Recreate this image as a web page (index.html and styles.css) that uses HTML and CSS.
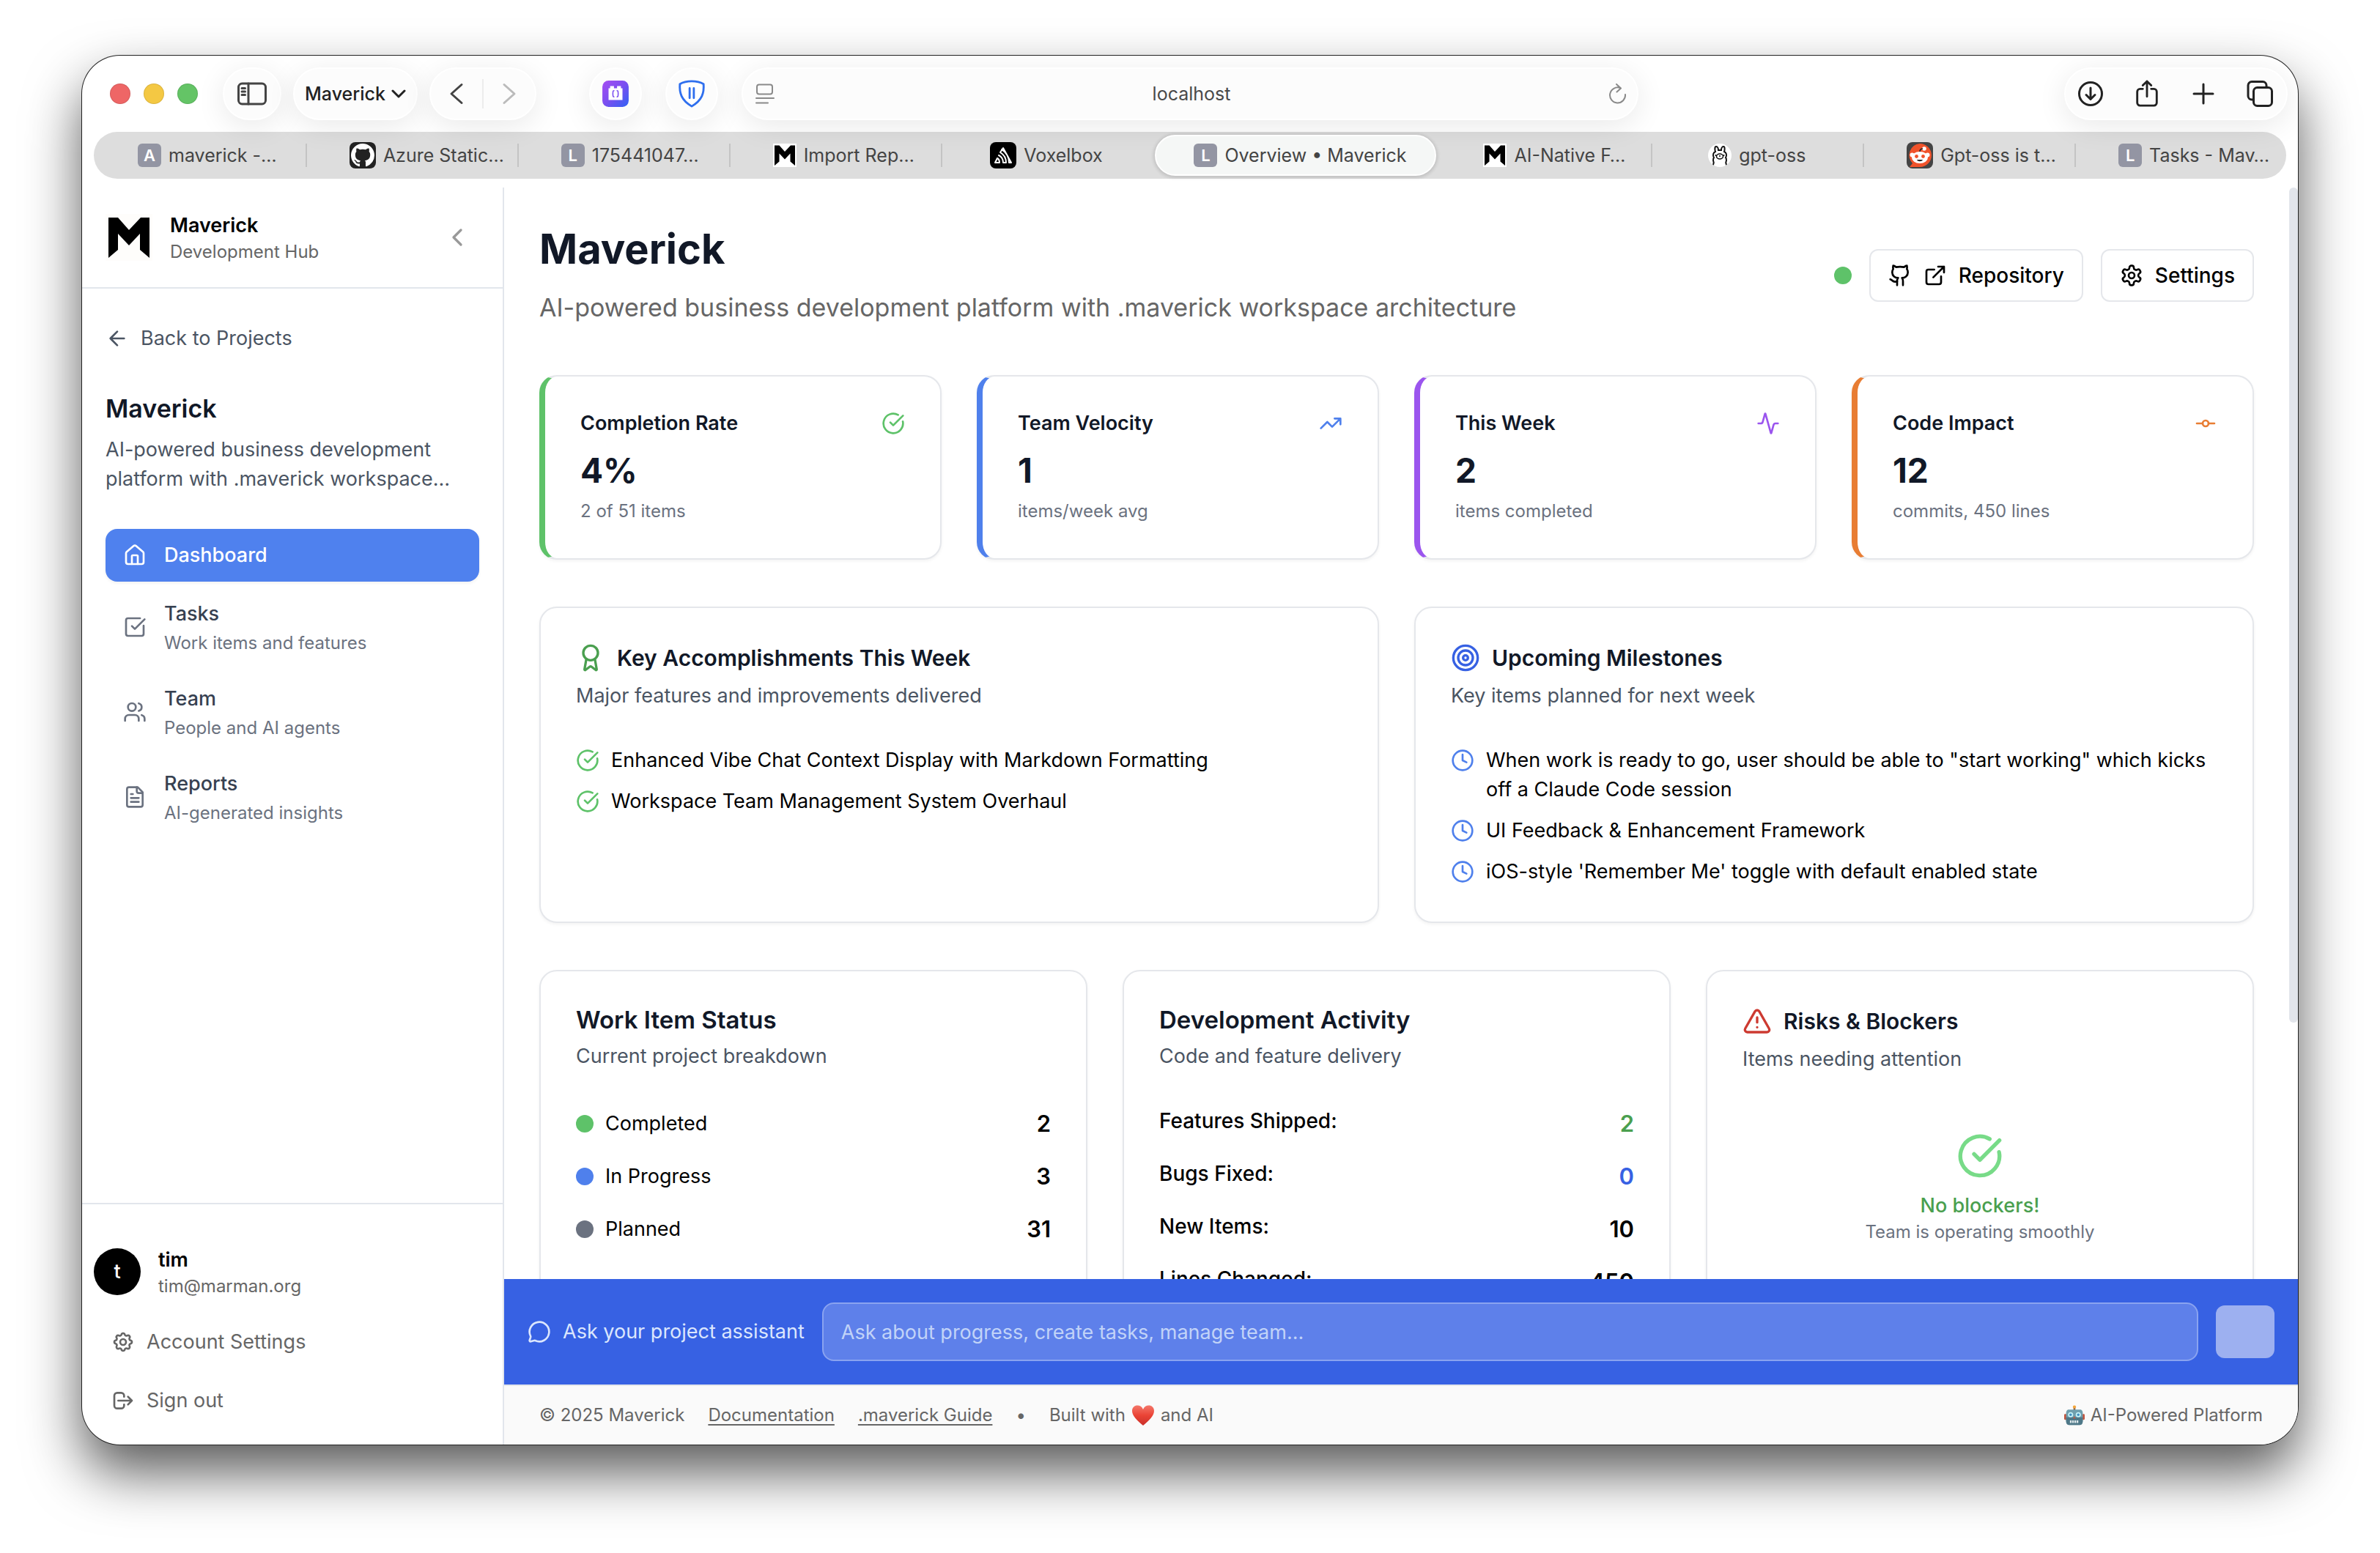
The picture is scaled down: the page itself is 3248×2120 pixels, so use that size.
FILE: index.html
```html
<!DOCTYPE html>
<html lang="en">
<head>
<meta charset="utf-8">
<title>Overview • Maverick</title>
<link rel="stylesheet" href="styles.css">
</head>
<body>
<svg class="sprite" aria-hidden="true">
  <symbol id="i-check" viewBox="0 0 24 24"><path d="M21.801 10A10 10 0 1 1 17 3.335"/><path d="m9 11 3 3L22 4"/></symbol>
  <symbol id="i-clock" viewBox="0 0 24 24"><circle cx="12" cy="12" r="10"/><path d="M12 6v6l4 2"/></symbol>
  <symbol id="i-logo" viewBox="0 0 64 64"><path fill="#000" stroke="none" d="M4 5h13l15 17L48 5h12v55L47 49V27L32 43 17 27v22L4 60z"/></symbol>
</svg>
<div class="window">
  <header class="browser">
    <div class="toolbar">
      <div class="lights"><span class="light light--close"></span><span class="light light--min"></span><span class="light light--max"></span></div>
      <button class="pill pill--sidebar" aria-label="Toggle sidebar"><svg class="icon-lg" viewBox="0 0 40 32"><rect x="1.500" y="2" width="37" height="28" rx="5"/><path d="M15 2v28M6 8.500h4.500M6 13h4.500M6 17.500h4.500"/></svg></button>
      <button class="pill pill--profile">Maverick<svg class="caret" viewBox="0 0 20 20"><path d="m2 6 8 8 8-8"/></svg></button>
      <div class="pill pill--nav">
        <button class="nav-btn" aria-label="Back"><svg viewBox="0 0 36 36"><path d="M25 5.500 11 18l14 12.500"/></svg></button>
        <span class="nav-sep"></span>
        <button class="nav-btn nav-btn--off" aria-label="Forward"><svg viewBox="0 0 36 36"><path d="m11 5.500 14 12.500-14 12.500"/></svg></button>
      </div>
      <button class="pill pill--round pill--ext" aria-label="Brick extension"><svg viewBox="0 0 36 36"><defs><linearGradient id="g-ext" x1="0" y1="0" x2="1" y2="1"><stop offset="0" stop-color="#a64df2"/><stop offset=".5" stop-color="#7a4ff0"/><stop offset="1" stop-color="#2f62f4"/></linearGradient></defs><rect x="1" y="1" width="34" height="34" rx="8" fill="url(#g-ext)"/><path fill="#fff" d="M9 11h2V8h5v3h4V8h5v3h2v15H9z"/><path fill="none" stroke="#7a4ff0" stroke-width="1.500" d="M16 14c-2 0-1 2-1.500 4 .5 2-.5 4 1.500 4M20 14c2 0 1 2 1.500 4-.5 2 .5 4-1.500 4"/></svg></button>
      <button class="pill pill--round" aria-label="Shield extension"><svg viewBox="0 0 40 40"><path fill="#fff" stroke="#2f6fee" stroke-width="3" d="M20 2c6 0 12 1 17 4 1 13-2 23-17 32C5 29 2 19 3 6c5-3 11-4 17-4z"/><path stroke="#2f6fee" stroke-width="3" fill="none" d="M17 12v14M23 12v14"/></svg></button>
      <div class="pill pill--url">
        <svg class="url-icon" viewBox="0 0 28 28"><rect x="3" y="1.500" width="21" height="13" rx="3"/><path d="M2 20h24M2 26.500h16"/></svg>
        <input class="url-input" type="text" value="localhost" aria-label="Address">
        <button class="reload" aria-label="Reload"><svg class="url-icon" viewBox="0 0 28 28"><path d="M24 15a10.500 10.500 0 1 1-7-9M12 1l6 5.500-5.500 5"/></svg></button>
      </div>
      <div class="pill pill--actions">
        <button class="act" aria-label="Downloads"><svg viewBox="0 0 36 36"><circle cx="18" cy="18" r="15.500"/><path d="M18 10v15M12 19.500l6 6 6-6"/></svg></button>
        <button class="act" aria-label="Share"><svg viewBox="0 0 36 40"><path d="M12 13H8a4 4 0 0 0-4 4v16a4 4 0 0 0 4 4h20a4 4 0 0 0 4-4V17a4 4 0 0 0-4-4h-4M18 24V2M12 8l6-6 6 6"/></svg></button>
        <button class="act" aria-label="New tab"><svg viewBox="0 0 36 36"><path d="M18 5v26M5 18h26"/></svg></button>
        <button class="act" aria-label="Tab overview"><svg viewBox="0 0 36 36"><rect x="9.500" y="9.500" width="25" height="25" rx="5"/><path d="M9 26H7a5 5 0 0 1-5-5V6.500A5 5 0 0 1 7 1.500h15a5 5 0 0 1 5 5V9"/></svg></button>
      </div>
    </div>
    <nav class="tabs" aria-label="Browser tabs">
      <a class="tab tab--cut" href="#"><span class="fav">A</span>maverick -…</a>
      <a class="tab tab--cut tab--sep" href="#"><svg class="fav-lg" viewBox="0 0 36 36"><rect width="36" height="36" rx="8" fill="#222"/><path transform="translate(2 2) scale(2)" fill="#fff" d="M8 0C3.580 0 0 3.580 0 8c0 3.540 2.290 6.530 5.470 7.590.4.070.55-.17.55-.38 0-.19-.01-.82-.01-1.490-2.010.37-2.530-.49-2.690-.94-.09-.23-.48-.94-.82-1.130-.28-.15-.68-.52-.01-.53.63-.01 1.080.58 1.230.82.72 1.210 1.870.87 2.330.66.07-.52.28-.87.51-1.070-1.780-.2-3.640-.89-3.640-3.950 0-.87.31-1.590.82-2.150-.08-.2-.36-1.020.08-2.120 0 0 .67-.21 2.200.82.64-.18 1.320-.27 2-.27s1.360.09 2 .27c1.530-1.040 2.200-.82 2.200-.82.44 1.100.16 1.920.08 2.120.51.56.82 1.270.82 2.150 0 3.070-1.870 3.750-3.650 3.950.29.25.54.73.54 1.480 0 1.070-.01 1.930-.01 2.200 0 .21.15.46.55.38A8.010 8.010 0 0 0 16 8c0-4.420-3.580-8-8-8z"/></svg>Azure Static…</a>
      <a class="tab tab--cut tab--sep" href="#"><span class="fav">L</span>175441047…</a>
      <a class="tab tab--cut tab--sep" href="#"><svg class="fav-m" viewBox="0 0 64 64"><use href="#i-logo"/></svg>Import Rep…</a>
      <a class="tab tab--sep" href="#"><svg class="fav-lg" viewBox="0 0 36 36"><rect width="36" height="36" rx="8" fill="#000"/><path fill="none" stroke="#fff" stroke-width="2" stroke-linejoin="round" stroke-linecap="round" d="M13 28H7l3-6c2 1 3 3 3 6zM12 18c4 2 6 6 6 10h4c0-6-3-11-8-14l4-6 11 20h-3c0-8-4-14-10-18"/></svg>Voxelbox</a>
      <a class="tab tab--active" href="#" aria-current="page"><span class="fav">L</span>Overview • Maverick</a>
      <a class="tab tab--cut" href="#"><svg class="fav-m" viewBox="0 0 64 64"><use href="#i-logo"/></svg>AI-Native F…</a>
      <a class="tab tab--sep" href="#"><svg class="fav-m fav-m--round" viewBox="0 0 32 32"><path fill="none" stroke="#111" stroke-width="2" stroke-linecap="round" d="M7 29c1-2 1-4 0-6 0-2 0-3 1-4-2-3-1-7 2-8-1-3-1-7 1-7s3 3 3 5h4c0-2 1-5 3-5s2 4 1 7c3 1 4 5 2 8 1 1 1 2 1 4-1 2-1 4 0 6"/><ellipse cx="16" cy="17.500" rx="4.500" ry="3.500" fill="none" stroke="#111" stroke-width="1.500"/><circle cx="10.500" cy="16" r="1"/><circle cx="21.500" cy="16" r="1"/><circle cx="16" cy="17" r="1"/></svg>gpt-oss</a>
      <a class="tab tab--cut tab--sep" href="#"><svg class="fav-lg" viewBox="0 0 36 36"><rect width="36" height="36" rx="8" fill="#444"/><path fill="#f0532b" d="M18 2a16 16 0 1 1 0 32H4l4-5A16 16 0 0 1 18 2z"/><ellipse cx="18" cy="21" rx="11" ry="8" fill="#fff"/><circle cx="7.500" cy="17.500" r="3" fill="#fff"/><circle cx="28.500" cy="17.500" r="3" fill="#fff"/><circle cx="24" cy="9" r="2.800" fill="#fff"/><path d="M18 13c0-3 2-4 4-4" stroke="#222" stroke-width="1.500" fill="none"/><circle cx="13.500" cy="19.500" r="2.400" fill="#f0532b"/><circle cx="22.500" cy="19.500" r="2.400" fill="#f0532b"/><path fill="#222" d="M14 24h8c-1 3-7 3-8 0z"/></svg>Gpt-oss is t…</a>
      <a class="tab tab--cut tab--sep" href="#"><span class="fav">L</span>Tasks - Mav…</a>
    </nav>
  </header>

  <div class="app">
    <aside class="sidebar">
      <div class="brand">
        <svg class="brand-logo" viewBox="0 0 64 64"><use href="#i-logo"/></svg>
        <div class="brand-text"><div class="brand-name">Maverick</div><div class="brand-sub">Development Hub</div></div>
        <button class="collapse" aria-label="Collapse sidebar"><svg class="ico ico--md" viewBox="0 0 24 24"><path d="m15 18-6-6 6-6"/></svg></button>
      </div>
      <div class="side-body">
        <a class="back" href="#"><svg class="ico" viewBox="0 0 24 24"><path d="m12 19-7-7 7-7M19 12H5"/></svg>Back to Projects</a>
        <div class="project">
          <h2 class="project-name">Maverick</h2>
          <p class="project-desc">AI-powered business development platform with .maverick workspace…</p>
        </div>
        <nav class="menu" aria-label="Project">
          <a class="menu-item menu-item--active" href="#"><svg class="ico" viewBox="0 0 24 24"><path d="M15 21v-8a1 1 0 0 0-1-1h-4a1 1 0 0 0-1 1v8"/><path d="M3 10a2 2 0 0 1 .709-1.528l7-5.999a2 2 0 0 1 2.582 0l7 5.999A2 2 0 0 1 21 10v9a2 2 0 0 1-2 2H5a2 2 0 0 1-2-2z"/></svg><span class="menu-title">Dashboard</span></a>
          <a class="menu-item" href="#"><svg class="ico" viewBox="0 0 24 24"><path d="M21 10.656V19a2 2 0 0 1-2 2H5a2 2 0 0 1-2-2V5a2 2 0 0 1 2-2h12.344"/><path d="m9 11 3 3L22 4"/></svg><span class="menu-text"><span class="menu-title">Tasks</span><span class="menu-sub">Work items and features</span></span></a>
          <a class="menu-item" href="#"><svg class="ico" viewBox="0 0 24 24"><path d="M16 21v-2a4 4 0 0 0-4-4H6a4 4 0 0 0-4 4v2"/><circle cx="9" cy="7" r="4"/><path d="M22 21v-2a4 4 0 0 0-3-3.870M16 3.130a4 4 0 0 1 0 7.750"/></svg><span class="menu-text"><span class="menu-title">Team</span><span class="menu-sub">People and AI agents</span></span></a>
          <a class="menu-item" href="#"><svg class="ico" viewBox="0 0 24 24"><path d="M15 2H6a2 2 0 0 0-2 2v16a2 2 0 0 0 2 2h12a2 2 0 0 0 2-2V7Z"/><path d="M14 2v4a2 2 0 0 0 2 2h4M10 9H8M16 13H8M16 17H8"/></svg><span class="menu-text"><span class="menu-title">Reports</span><span class="menu-sub">AI-generated insights</span></span></a>
        </nav>
      </div>
      <div class="account">
        <div class="user"><span class="avatar">t</span><div class="brand-text"><div class="brand-name">tim</div><div class="brand-sub">tim@marman.org</div></div></div>
        <a class="account-link" href="#"><svg class="ico" viewBox="0 0 24 24"><path d="M10.325 4.317c.426-1.756 2.924-1.756 3.350 0a1.724 1.724 0 0 0 2.573 1.066c1.543-.94 3.310.826 2.370 2.370a1.724 1.724 0 0 0 1.065 2.572c1.756.426 1.756 2.924 0 3.350a1.724 1.724 0 0 0-1.066 2.573c.94 1.543-.826 3.310-2.370 2.370a1.724 1.724 0 0 0-2.572 1.065c-.426 1.756-2.924 1.756-3.350 0a1.724 1.724 0 0 0-2.573-1.066c-1.543.94-3.310-.826-2.370-2.370a1.724 1.724 0 0 0-1.065-2.572c-1.756-.426-1.756-2.924 0-3.350a1.724 1.724 0 0 0 1.066-2.573c-.94-1.543.826-3.310 2.370-2.370.996.608 2.296.07 2.572-1.065z"/><circle cx="12" cy="12" r="3"/></svg>Account Settings</a>
        <a class="account-link" href="#"><svg class="ico" viewBox="0 0 24 24"><path d="m17 16 4-4m0 0-4-4m4 4H7m6 4v1a3 3 0 0 1-3 3H6a3 3 0 0 1-3-3V7a3 3 0 0 1 3-3h4a3 3 0 0 1 3 3v1"/></svg>Sign out</a>
      </div>
    </aside>

    <div class="main">
      <div class="scroll-row">
        <main class="content">
          <div class="page-head">
            <div>
              <h1 class="page-title">Maverick</h1>
              <p class="page-sub">AI-powered business development platform with .maverick workspace architecture</p>
            </div>
            <div class="page-actions">
              <span class="status-dot"></span>
              <button class="btn"><svg class="ico" viewBox="0 0 24 24"><path d="M15 22v-4a4.800 4.800 0 0 0-1-3.500c3 0 6-2 6-5.500.08-1.250-.27-2.480-1-3.500.28-1.150.28-2.350 0-3.500 0 0-1 0-3 1.500-2.640-.5-5.360-.5-8 0C6 2 5 2 5 2c-.3 1.150-.3 2.350 0 3.500A5.403 5.403 0 0 0 4 9c0 3.500 3 5.500 6 5.500-.39.49-.68 1.050-.85 1.650-.17.6-.22 1.230-.15 1.850v4"/><path d="M9 18c-4.510 2-5-2-7-2"/></svg><svg class="ico" viewBox="0 0 24 24"><path d="M15 3h6v6M10 14 21 3M18 13v6a2 2 0 0 1-2 2H5a2 2 0 0 1-2-2V8a2 2 0 0 1 2-2h6"/></svg>Repository</button>
              <button class="btn"><svg class="ico" viewBox="0 0 24 24"><path d="M12.220 2h-.44a2 2 0 0 0-2 2v.18a2 2 0 0 1-1 1.730l-.43.25a2 2 0 0 1-2 0l-.15-.08a2 2 0 0 0-2.730.73l-.22.38a2 2 0 0 0 .73 2.730l.15.1a2 2 0 0 1 1 1.720v.51a2 2 0 0 1-1 1.740l-.15.09a2 2 0 0 0-.73 2.730l.22.38a2 2 0 0 0 2.730.73l.15-.08a2 2 0 0 1 2 0l.43.25a2 2 0 0 1 1 1.730V20a2 2 0 0 0 2 2h.44a2 2 0 0 0 2-2v-.18a2 2 0 0 1 1-1.730l.43-.25a2 2 0 0 1 2 0l.15.08a2 2 0 0 0 2.730-.73l.22-.39a2 2 0 0 0-.73-2.730l-.15-.08a2 2 0 0 1-1-1.740v-.5a2 2 0 0 1 1-1.740l.15-.09a2 2 0 0 0 .73-2.730l-.22-.38a2 2 0 0 0-2.730-.73l-.15.08a2 2 0 0 1-2 0l-.43-.25a2 2 0 0 1-1-1.730V4a2 2 0 0 0-2-2z"/><circle cx="12" cy="12" r="3"/></svg>Settings</button>
            </div>
          </div>

          <div class="grid grid--4">
            <section class="card stat stat--green">
              <div class="stat-head"><h3 class="stat-title">Completion Rate</h3><svg class="ico"><use href="#i-check"/></svg></div>
              <div class="stat-value">4%</div><div class="stat-note">2 of 51 items</div>
            </section>
            <section class="card stat stat--blue">
              <div class="stat-head"><h3 class="stat-title">Team Velocity</h3><svg class="ico" viewBox="0 0 24 24"><path d="M16 7h6v6M22 7l-8.500 8.500-5-5L2 17"/></svg></div>
              <div class="stat-value">1</div><div class="stat-note">items/week avg</div>
            </section>
            <section class="card stat stat--purple">
              <div class="stat-head"><h3 class="stat-title">This Week</h3><svg class="ico" viewBox="0 0 24 24"><path d="M22 12h-2.480a2 2 0 0 0-1.930 1.460l-2.350 8.360a.25.25 0 0 1-.48 0L9.240 2.180a.25.25 0 0 0-.48 0l-2.350 8.360A2 2 0 0 1 4.490 12H2"/></svg></div>
              <div class="stat-value">2</div><div class="stat-note">items completed</div>
            </section>
            <section class="card stat stat--orange">
              <div class="stat-head"><h3 class="stat-title">Code Impact</h3><svg class="ico" viewBox="0 0 24 24"><circle cx="12" cy="12" r="3"/><path d="M3 12h6M15 12h6"/></svg></div>
              <div class="stat-value">12</div><div class="stat-note">commits, 450 lines</div>
            </section>
          </div>

          <div class="grid grid--2">
            <section class="card">
              <h3 class="card-title card-title--icon"><svg class="ico ico--md c-green" viewBox="0 0 24 24"><path d="m15.477 12.890 1.515 8.526a.5.5 0 0 1-.81.47l-3.580-2.687a1 1 0 0 0-1.197 0l-3.586 2.686a.5.5 0 0 1-.81-.469l1.514-8.526"/><circle cx="12" cy="8" r="6"/></svg>Key Accomplishments This Week</h3>
              <p class="card-sub">Major features and improvements delivered</p>
              <ul class="list list--done">
                <li><svg class="ico"><use href="#i-check"/></svg>Enhanced Vibe Chat Context Display with Markdown Formatting</li>
                <li><svg class="ico"><use href="#i-check"/></svg>Workspace Team Management System Overhaul</li>
              </ul>
            </section>
            <section class="card">
              <h3 class="card-title card-title--icon"><svg class="ico ico--md c-blue" viewBox="0 0 24 24"><circle cx="12" cy="12" r="10"/><circle cx="12" cy="12" r="6"/><circle cx="12" cy="12" r="2"/></svg>Upcoming Milestones</h3>
              <p class="card-sub">Key items planned for next week</p>
              <ul class="list list--next">
                <li><svg class="ico"><use href="#i-clock"/></svg>When work is ready to go, user should be able to "start working" which kicks off a Claude Code session</li>
                <li><svg class="ico"><use href="#i-clock"/></svg>UI Feedback &amp; Enhancement Framework</li>
                <li><svg class="ico"><use href="#i-clock"/></svg>iOS-style 'Remember Me' toggle with default enabled state</li>
              </ul>
            </section>
          </div>

          <div class="grid grid--3">
            <section class="card">
              <h3 class="card-title card-title--lg">Work Item Status</h3>
              <p class="card-sub">Current project breakdown</p>
              <dl class="rows">
                <div class="row row--center"><dt><span class="dot dot--green"></span>Completed</dt><dd>2</dd></div>
                <div class="row row--center"><dt><span class="dot dot--blue"></span>In Progress</dt><dd>3</dd></div>
                <div class="row row--center"><dt><span class="dot dot--gray"></span>Planned</dt><dd>31</dd></div>
              </dl>
            </section>
            <section class="card">
              <h3 class="card-title card-title--lg">Development Activity</h3>
              <p class="card-sub">Code and feature delivery</p>
              <dl class="rows rows--strong">
                <div class="row"><dt>Features Shipped:</dt><dd class="c-green">2</dd></div>
                <div class="row"><dt>Bugs Fixed:</dt><dd class="c-blue">0</dd></div>
                <div class="row"><dt>New Items:</dt><dd>10</dd></div>
                <div class="row"><dt>Lines Changed:</dt><dd>450</dd></div>
              </dl>
            </section>
            <section class="card">
              <h3 class="card-title card-title--icon"><svg class="ico ico--md c-red" viewBox="0 0 24 24"><path d="m21.730 18-8-14a2 2 0 0 0-3.480 0l-8 14A2 2 0 0 0 4 21h16a2 2 0 0 0 1.730-3M12 9v4M12 17h.01"/></svg>Risks &amp; Blockers</h3>
              <p class="card-sub">Items needing attention</p>
              <div class="clear">
                <svg class="ico ico--xl"><use href="#i-check"/></svg>
                <div class="clear-title">No blockers!</div>
                <div class="stat-note">Team is operating smoothly</div>
              </div>
            </section>
          </div>
        </main>
        <div class="rail"><div class="thumb"></div></div>
      </div>

      <form class="assistant">
        <label class="assistant-label" for="ask"><svg class="ico" viewBox="0 0 24 24"><path d="M2.992 16.342a2 2 0 0 1 .094 1.167l-1.065 3.290a1 1 0 0 0 1.236 1.168l3.413-.998a2 2 0 0 1 1.099.092 10 10 0 1 0-4.777-4.719"/></svg>Ask your project assistant</label>
        <input class="assistant-input" id="ask" type="text" placeholder="Ask about progress, create tasks, manage team...">
        <button class="assistant-send" type="button" aria-label="Send"></button>
      </form>

      <footer class="footer">
        <span>© 2025 Maverick</span>
        <a href="#">Documentation</a>
        <a href="#">.maverick Guide</a>
        <span>•</span>
        <span class="inline">Built with <svg class="heart" viewBox="0 0 32 32"><defs><linearGradient id="g-heart" x1="0" y1="0" x2="0" y2="1"><stop offset="0" stop-color="#f4776a"/><stop offset=".5" stop-color="#ea4335"/><stop offset="1" stop-color="#c9302a"/></linearGradient></defs><path fill="url(#g-heart)" d="M16 30C8 23 1 17 1 10c0-9 12-10 15-2 3-8 15-7 15 2 0 7-7 13-15 20z"/></svg> and AI</span>
        <span class="inline inline--end"><svg class="robot" viewBox="0 0 32 32"><circle cx="16" cy="3" r="2.500" fill="#f3a63c"/><path d="M16 5v3" stroke="#8a5a3c" stroke-width="3"/><rect x="0" y="14" width="4" height="9" rx="1.500" fill="#c2553f"/><rect x="28" y="14" width="4" height="9" rx="1.500" fill="#c2553f"/><path fill="#6f9fae" d="M7 7h18c3 0 4 3 4 6v12c0 4-2 6-5 6H8c-3 0-5-2-5-6V13c0-3 1-6 4-6z"/><path fill="#4f7888" d="M3 19h26v6c0 4-2 6-5 6H8c-3 0-5-2-5-6z"/><circle cx="10" cy="15" r="4" fill="#c5f1f8"/><circle cx="22" cy="15" r="4" fill="#c5f1f8"/><circle cx="10" cy="15" r="2" fill="#3f8fc0"/><circle cx="22" cy="15" r="2" fill="#3f8fc0"/><path fill="#c2553f" d="m16 17 2 4h-4z"/><path stroke="#dfe9ec" stroke-width="4" stroke-dasharray="2.500 1" d="M9 26h14"/></svg> AI-Powered Platform</span>
      </footer>
    </div>
  </div>
</div>
</body>
</html>
```
FILE: styles.css
```css
* { box-sizing: border-box; margin: 0; }

body {
  height: 100vh;
  padding: 76px 112px 148px;
  display: flex;
  background: #fff;
  color: #000;
  font-family: Inter, "Liberation Sans", sans-serif;
  font-size: 27px;
  line-height: 40px;
}

button, input { font: inherit; color: inherit; }
button { padding: 0; border: 0; background: none; }
a { color: inherit; text-decoration: none; }
ul, dl { padding: 0; list-style: none; }
svg { display: block; flex: none; }
.sprite { position: absolute; width: 0; height: 0; }

.ico {
  width: 32px;
  height: 32px;
  fill: none;
  stroke: currentColor;
  stroke-width: 2;
  stroke-linecap: round;
  stroke-linejoin: round;
}
.ico--md { width: 40px; height: 40px; }
.ico--xl { width: 64px; height: 64px; }

/* Window frame */
.window {
  flex: 1;
  min-width: 0;
  display: flex;
  flex-direction: column;
  overflow: hidden;
  border-radius: 52px;
  background: #fff;
  box-shadow: 0 0 0 1px #222, 0 38px 76px rgba(0, 0, 0, .65);
}

/* Browser toolbar */
.browser { padding: 16px 14px 12px 16px; }
.toolbar {
  display: flex;
  align-items: center;
  padding-left: 22px;
  color: #222;
  font-size: 25px;
}
.lights { display: flex; gap: 18px; margin-right: 34px; }
.light { width: 28px; height: 28px; border-radius: 50%; border: 1px solid rgba(0, 0, 0, .1); }
.light--close { background: #ee6666; }
.light--min { background: #f4c843; }
.light--max { background: #64c466; }

.pill {
  display: flex;
  align-items: center;
  justify-content: center;
  height: 72px;
  border: 2px solid #fff;
  border-radius: 36px;
  background: #fcfcfc;
  box-shadow: 0 8px 40px rgba(0, 0, 0, .09);
}
.pill svg { fill: none; stroke: currentColor; stroke-width: 3; stroke-linecap: round; stroke-linejoin: round; }
.pill--sidebar { width: 80px; margin-right: 16px; }
.icon-lg { width: 40px; height: 32px; color: #444; }
.pill--profile { width: 170px; gap: 8px; margin-right: 16px; font-weight: 500; }
.caret { width: 20px; height: 20px; }
.pill--nav { width: 146px; margin-right: 72px; }
.nav-btn { flex: 1; display: flex; justify-content: center; color: #444; }
.nav-btn svg { width: 36px; height: 36px; }
.nav-btn--off { color: #bbb; }
.nav-sep { width: 2px; height: 40px; background: #ececec; }
.pill--round { width: 72px; margin-right: 32px; }
.pill--round svg { width: 38px; height: 38px; stroke: none; }
.pill--url { flex: 0 1 1224px; min-width: 0; padding: 0 12px 0 16px; color: #8a8a8a; }
.url-icon { width: 28px; height: 28px; }
.pill .url-icon { stroke-width: 2; }
.url-input { flex: 1; min-width: 0; border: 0; background: none; text-align: center; color: #4a4a4a; }
.pill--actions { width: 305px; margin-left: auto; padding: 0 18px 0 16px; justify-content: space-between; }
.act svg { width: 36px; height: 38px; }

/* Browser tabs */
.tabs {
  display: grid;
  grid-template-columns: repeat(5, 1fr) 392px repeat(4, 1fr);
  height: 64px;
  margin: 16px 2px 0 0;
  border-radius: 32px;
  background: #ddd;
  color: #444;
  font-size: 25px;
}
.tab {
  display: flex;
  align-items: center;
  justify-content: center;
  gap: 10px;
  min-width: 0;
  white-space: nowrap;
}
.tab--cut { justify-content: flex-start; padding-left: 60px; }
.tab--sep { background: linear-gradient(#c4c4c4, #c4c4c4) left center / 2px 32px no-repeat; }
.tab--active {
  margin: 4px;
  padding-left: 12px;
  border: 2px solid #fff;
  border-radius: 28px;
  background: #f5f7f6;
  box-shadow: 0 1px 4px 2px rgba(0, 0, 0, .12);
}
.fav {
  width: 32px;
  height: 32px;
  border-radius: 6px;
  background: #9395a3;
  color: #fff;
  font-size: 22px;
  font-weight: 600;
  line-height: 32px;
  text-align: center;
}
.fav-lg { width: 36px; height: 36px; }
.fav-m { width: 32px; height: 32px; background: #fff; }
.fav-m--round { border-radius: 50%; }

/* App shell */
.app { flex: 1; min-height: 0; display: flex; }
.sidebar {
  flex: none;
  display: flex;
  flex-direction: column;
  width: 576px;
  border-right: 2px solid #e2e6ec;
}
.brand {
  display: flex;
  align-items: center;
  padding: 32px 30px 32px 32px;
  border-bottom: 2px solid #e2e6ec;
}
.brand-logo { width: 64px; height: 64px; background: #fefdfb; }
.brand-text { flex: 1; margin-left: 24px; }
.brand-name { font-weight: 600; }
.brand-sub { color: #666; font-size: 24px; line-height: 32px; }
.collapse { display: flex; justify-content: center; width: 64px; color: #999; }

.side-body { flex: 1; padding: 48px 32px 0; }
.back { display: flex; align-items: center; gap: 16px; color: #4b5563; }
.project { margin: 48px 0; }
.project-name { margin-bottom: 8px; color: #111827; font-size: 34px; font-weight: 600; line-height: 56px; }
.project-desc { color: #4b5563; }
.menu { display: flex; flex-direction: column; gap: 8px; }
.menu-item {
  display: flex;
  align-items: center;
  gap: 24px;
  padding: 16px 24px;
  border-radius: 16px;
  color: #6b7280;
}
.menu-item--active { background: #4f81ee; color: #fff; box-shadow: 0 2px 4px rgba(0, 0, 0, .06); }
.menu-text { display: flex; flex-direction: column; gap: 4px; }
.menu-title { color: #374151; font-weight: 500; }
.menu-item--active .menu-title { color: #fff; }
.menu-sub { font-size: 24px; line-height: 32px; }

.account {
  display: flex;
  flex-direction: column;
  gap: 16px;
  padding: 56px 16px 28px;
  border-top: 2px solid #e2e6ec;
}
.user { display: flex; align-items: center; margin-bottom: 12px; }
.avatar {
  width: 64px;
  height: 64px;
  border-radius: 50%;
  background: #000;
  color: #fff;
  font-weight: 500;
  line-height: 64px;
  text-align: center;
}
.account-link { display: flex; align-items: center; gap: 16px; padding: 12px 24px; color: #666; }

/* Main column */
.main { flex: 1; min-width: 0; display: flex; flex-direction: column; }
.scroll-row { flex: 1; min-height: 0; display: flex; overflow: hidden; }
.content { flex: 1; min-width: 0; padding: 48px; }
.rail { width: 12px; }
.thumb { height: 76.5%; border-radius: 6px; background: #e2e5eb; }

.page-head { display: flex; align-items: center; justify-content: space-between; }
.page-title { color: #111827; font-size: 56px; font-weight: 700; line-height: 72px; }
.page-sub { margin-top: 16px; color: #666; font-size: 34px; line-height: 56px; }
.page-actions { display: flex; align-items: center; gap: 24px; }
.status-dot { width: 24px; height: 24px; border-radius: 50%; background: #5ec269; }
.btn {
  display: flex;
  align-items: center;
  gap: 16px;
  padding: 14px 24px;
  border: 2px solid #e5e7eb;
  border-radius: 12px;
  background: #fff;
  font-size: 28px;
  font-weight: 500;
}

.grid { display: grid; gap: 48px; margin-top: 64px; }
.grid--4 { grid-template-columns: repeat(4, 1fr); }
.grid--2 { grid-template-columns: repeat(2, 1fr); }
.grid--3 { grid-template-columns: repeat(3, 1fr); }

.card {
  min-width: 0;
  padding: 48px;
  border: 2px solid #e5e7eb;
  border-radius: 24px;
  background: #fff;
  box-shadow: 0 2px 4px rgba(0, 0, 0, .05);
}
.stat { border-left-width: 8px; }
.stat--green { border-left-color: #5ec269; }
.stat--blue { border-left-color: #4f80ec; }
.stat--purple { border-left-color: #9b55ee; }
.stat--orange { border-left-color: #e87d33; }
.stat--green .ico { color: #5ec269; }
.stat--blue .ico { color: #4f80ec; }
.stat--purple .ico { color: #9b55ee; }
.stat--orange .ico { color: #e87d33; }
.stat-head { display: flex; align-items: center; justify-content: space-between; }
.stat-title { color: #111827; font-size: 27px; font-weight: 600; line-height: 32px; }
.stat-value { margin: 16px 0 8px; color: #111827; font-size: 46px; font-weight: 700; line-height: 64px; }
.stat-note { color: #6b7280; font-size: 24px; line-height: 32px; }

.card-title { color: #111827; font-size: 30px; font-weight: 600; line-height: 40px; }
.card-title--icon { display: flex; align-items: center; gap: 16px; }
.card-title--lg { font-size: 33px; line-height: 36px; }
.card-sub { margin-top: 12px; color: #4b5563; }
.c-green { color: #4a9f4f; }
.c-blue { color: #3761e3; }
.c-red { color: #cd3a31; }

.list { display: flex; flex-direction: column; gap: 16px; margin-top: 48px; }
.list li { display: flex; gap: 16px; }
.list .ico { margin-top: 4px; }
.list--done .ico { color: #5ec269; }
.list--next .ico { color: #4f80ec; }

.rows { display: flex; flex-direction: column; gap: 24px; margin-top: 48px; }
.row { display: flex; justify-content: space-between; }
.row--center { align-items: center; }
.row dt { display: flex; align-items: center; gap: 16px; height: 40px; }
.row dd { font-size: 31px; font-weight: 600; line-height: 48px; }
.rows--strong dt { font-size: 28px; font-weight: 500; }
.dot { width: 24px; height: 24px; border-radius: 50%; }
.dot--green { background: #5ec269; }
.dot--blue { background: #4f80ec; }
.dot--gray { background: #6b7280; }

.clear { display: flex; flex-direction: column; align-items: center; margin-top: 48px; padding: 32px 0; color: #78db88; }
.clear-title { margin-top: 16px; color: #4a9f4f; font-weight: 500; }

/* Assistant bar */
.assistant { display: flex; align-items: center; gap: 24px; padding: 32px; background: #3761e3; }
.assistant-label { display: flex; align-items: center; gap: 16px; color: #dbe6fd; }
.assistant-input {
  flex: 1;
  min-width: 0;
  height: 80px;
  padding: 0 24px;
  border: 2px solid #8aa3f0;
  border-radius: 16px;
  background: #5e80ea;
  color: #fff;
}
.assistant-input::placeholder { color: #c1d3f8; opacity: 1; }
.assistant-send { width: 80px; height: 72px; border-radius: 12px; background: #9db0f0; }

/* Footer */
.footer {
  display: flex;
  align-items: center;
  gap: 32px;
  padding: 20px 48px;
  border-top: 2px solid #e5e7eb;
  background: #fafafa;
  color: #666;
  font-size: 24px;
}
.footer a { text-decoration: underline; text-underline-offset: 4px; text-decoration-thickness: 2px; }
.inline { display: flex; align-items: center; gap: 8px; }
.inline--end { margin-left: auto; }
.heart { width: 32px; height: 32px; }
.robot { width: 28px; height: 32px; }
```
